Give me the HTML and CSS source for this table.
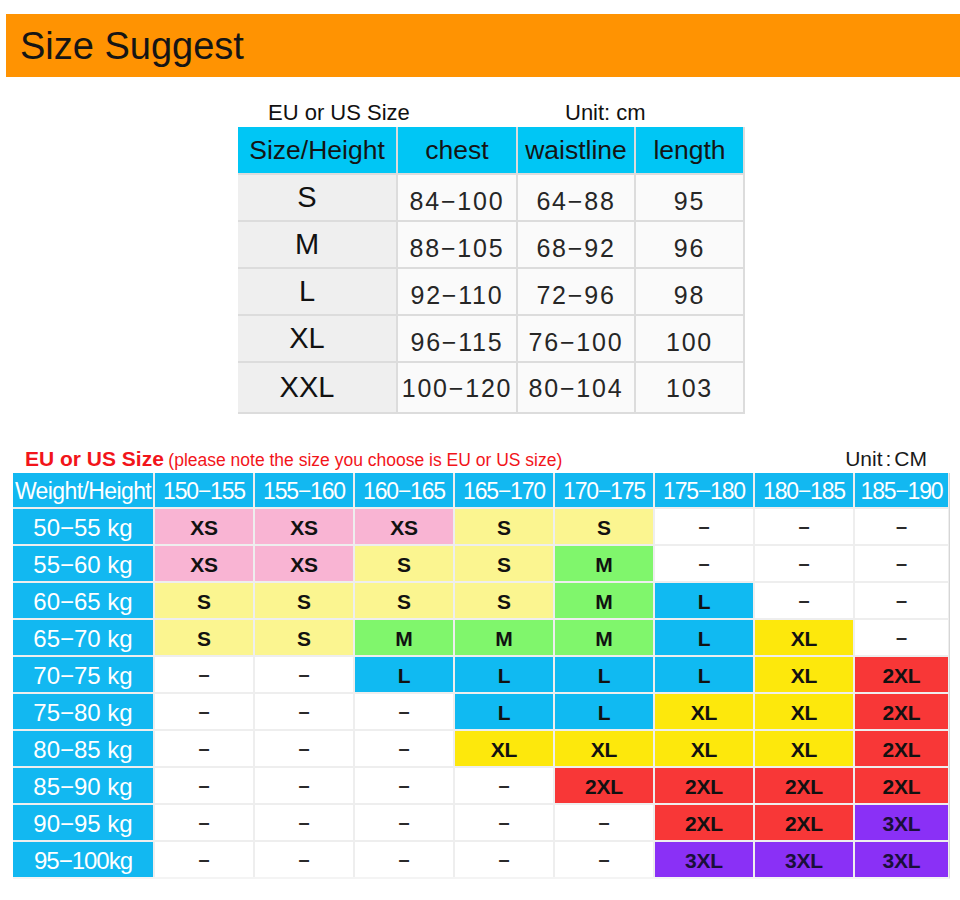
FILE: index.html
```html
<!DOCTYPE html>
<html>
<head>
<meta charset="utf-8">
<link rel="stylesheet" href="styles.css">
</head>
<body>
<div class="banner">Size Suggest</div>

<section class="chart">
  <div class="chart-caption"><span class="cap-left">EU or US Size</span><span class="cap-right">Unit: cm</span></div>
  <div class="chart-grid">
    <div class="th">Size/Height</div><div class="th">chest</div><div class="th">waistline</div><div class="th">length</div>
    <div class="sz">S</div><div class="num">84−100</div><div class="num">64−88</div><div class="num">95</div>
    <div class="sz">M</div><div class="num">88−105</div><div class="num">68−92</div><div class="num">96</div>
    <div class="sz">L</div><div class="num">92−110</div><div class="num">72−96</div><div class="num">98</div>
    <div class="sz">XL</div><div class="num">96−115</div><div class="num">76−100</div><div class="num">100</div>
    <div class="sz last">XXL</div><div class="num last">100−120</div><div class="num last">80−104</div><div class="num last">103</div>
  </div>
</section>

<section class="guide">
  <div class="guide-caption">
    <div class="note"><b>EU or US Size</b> <span>(please note the size you choose is EU or US size)</span></div>
    <div class="unit">Unit<span class="colon">:</span>CM</div>
  </div>
  <div class="guide-grid">
    <div class="h hw">Weight/Height</div><div class="h">150−155</div><div class="h">155−160</div><div class="h">160−165</div><div class="h">165−170</div><div class="h">170−175</div><div class="h">175−180</div><div class="h">180−185</div><div class="h">185−190</div>

    <div class="w">50−55 kg</div><div class="c p">XS</div><div class="c p">XS</div><div class="c p">XS</div><div class="c py">S</div><div class="c py">S</div><div class="c e">–</div><div class="c e">–</div><div class="c e">–</div>
    <div class="w">55−60 kg</div><div class="c p">XS</div><div class="c p">XS</div><div class="c py">S</div><div class="c py">S</div><div class="c g">M</div><div class="c e">–</div><div class="c e">–</div><div class="c e">–</div>
    <div class="w">60−65 kg</div><div class="c py">S</div><div class="c py">S</div><div class="c py">S</div><div class="c py">S</div><div class="c g">M</div><div class="c b">L</div><div class="c e">–</div><div class="c e">–</div>
    <div class="w">65−70 kg</div><div class="c py">S</div><div class="c py">S</div><div class="c g">M</div><div class="c g">M</div><div class="c g">M</div><div class="c b">L</div><div class="c y">XL</div><div class="c e">–</div>
    <div class="w">70−75 kg</div><div class="c e">–</div><div class="c e">–</div><div class="c b">L</div><div class="c b">L</div><div class="c b">L</div><div class="c b">L</div><div class="c y">XL</div><div class="c r">2XL</div>
    <div class="w">75−80 kg</div><div class="c e">–</div><div class="c e">–</div><div class="c e">–</div><div class="c b">L</div><div class="c b">L</div><div class="c y">XL</div><div class="c y">XL</div><div class="c r">2XL</div>
    <div class="w">80−85 kg</div><div class="c e">–</div><div class="c e">–</div><div class="c e">–</div><div class="c y">XL</div><div class="c y">XL</div><div class="c y">XL</div><div class="c y">XL</div><div class="c r">2XL</div>
    <div class="w">85−90 kg</div><div class="c e">–</div><div class="c e">–</div><div class="c e">–</div><div class="c e">–</div><div class="c r">2XL</div><div class="c r">2XL</div><div class="c r">2XL</div><div class="c r">2XL</div>
    <div class="w">90−95 kg</div><div class="c e">–</div><div class="c e">–</div><div class="c e">–</div><div class="c e">–</div><div class="c e">–</div><div class="c r">2XL</div><div class="c r">2XL</div><div class="c v">3XL</div>
    <div class="w tight">95−100kg</div><div class="c e">–</div><div class="c e">–</div><div class="c e">–</div><div class="c e">–</div><div class="c e">–</div><div class="c v">3XL</div><div class="c v">3XL</div><div class="c v">3XL</div>
  </div>
</section>
</body>
</html>
```
FILE: styles.css
```css
html, body {
  margin: 0;
  padding: 0;
  background: #ffffff;
}

body {
  font-family: "Liberation Sans", Arial, sans-serif;
  color: #1a1a1a;
  width: 960px;
}

.banner {
  margin: 14px 0 0 6px;
  height: 63px;
  line-height: 65px;
  background: #ff9302;
  padding-left: 14px;
  font-size: 38px;
  color: #151515;
}

/* top size chart */
.chart {
  margin: 23px 0 0 238px;
  width: 507px;
}

.chart-caption {
  height: 26px;
  line-height: 26px;
  font-size: 22px;
  color: #111;
  display: flex;
  margin-bottom: 1px;
}

.cap-left {
  margin-left: 30px;
  width: 297px;
}

.chart-grid {
  display: grid;
  grid-template-columns: 158px 118px 116px 107px;
  grid-template-rows: 46px 45px 45px 45px 45px 49px;
  gap: 2px;
  background: #dcdcdc;
  padding: 0 2px 2px 0;
}

.chart-grid > div {
  display: flex;
  align-items: center;
  justify-content: center;
}

.th {
  background: #00c6f5;
  font-size: 26.5px;
  color: #141414;
}

.sz {
  background: #efefef;
  font-size: 29px;
  color: #111;
  padding-right: 20px;
}

.num {
  background: #fafafa;
  font-size: 25px;
  letter-spacing: 1.8px;
  color: #262626;
  padding-top: 8px;
}

.num.last {
  padding-top: 2px;
}

/* weight / height guide */
.guide {
  margin: 33px 0 0 13px;
  width: 937px;
}

.guide-caption {
  display: flex;
  justify-content: space-between;
  align-items: baseline;
  height: 24px;
  line-height: 24px;
  margin-bottom: 2px;
  padding: 0 23px 0 12px;
}

.note {
  color: #f2141a;
}

.note b {
  font-size: 21px;
  font-weight: bold;
}

.note span {
  font-size: 17.5px;
}

.unit {
  font-size: 21px;
  color: #1a1a1a;
}

.colon {
  margin: 0 3px;
}

.guide-grid {
  display: grid;
  grid-template-columns: 140px repeat(7, 98px) 93px;
  grid-template-rows: 34px repeat(10, 35px);
  gap: 2px;
  background: #eeeeee;
  padding-right: 2px;
  border-right: 1px solid #d6d6d6;
  border-bottom: 2px solid #f4f4f4;
}

.guide-grid > div {
  display: flex;
  align-items: center;
  justify-content: center;
}

.h {
  background: #12b8f1;
  color: #ffffff;
  font-size: 23px;
  letter-spacing: -1.2px;
  padding-top: 3px;
}

.h.hw {
  letter-spacing: -0.6px;
}

.w {
  background: #12b8f1;
  color: #ffffff;
  font-size: 24px;
  padding-top: 3px;
}

.w.tight {
  letter-spacing: -1px;
}

.c {
  font-size: 21px;
  font-weight: bold;
  letter-spacing: -0.2px;
  color: #111;
  padding-top: 3px;
}

.c.e {
  background: #ffffff;
  font-size: 20px;
  color: #2a2a2a;
  padding-top: 0;
}

.p { background: #f9b4d3; }
.py { background: #fbf590; }
.g { background: #80f66c; }
.b { background: #10baf2; }
.y { background: #fde80c; }
.r { background: #f83737; }
.v { background: #8a30f6; color: #1a0f3a !important; }
```
